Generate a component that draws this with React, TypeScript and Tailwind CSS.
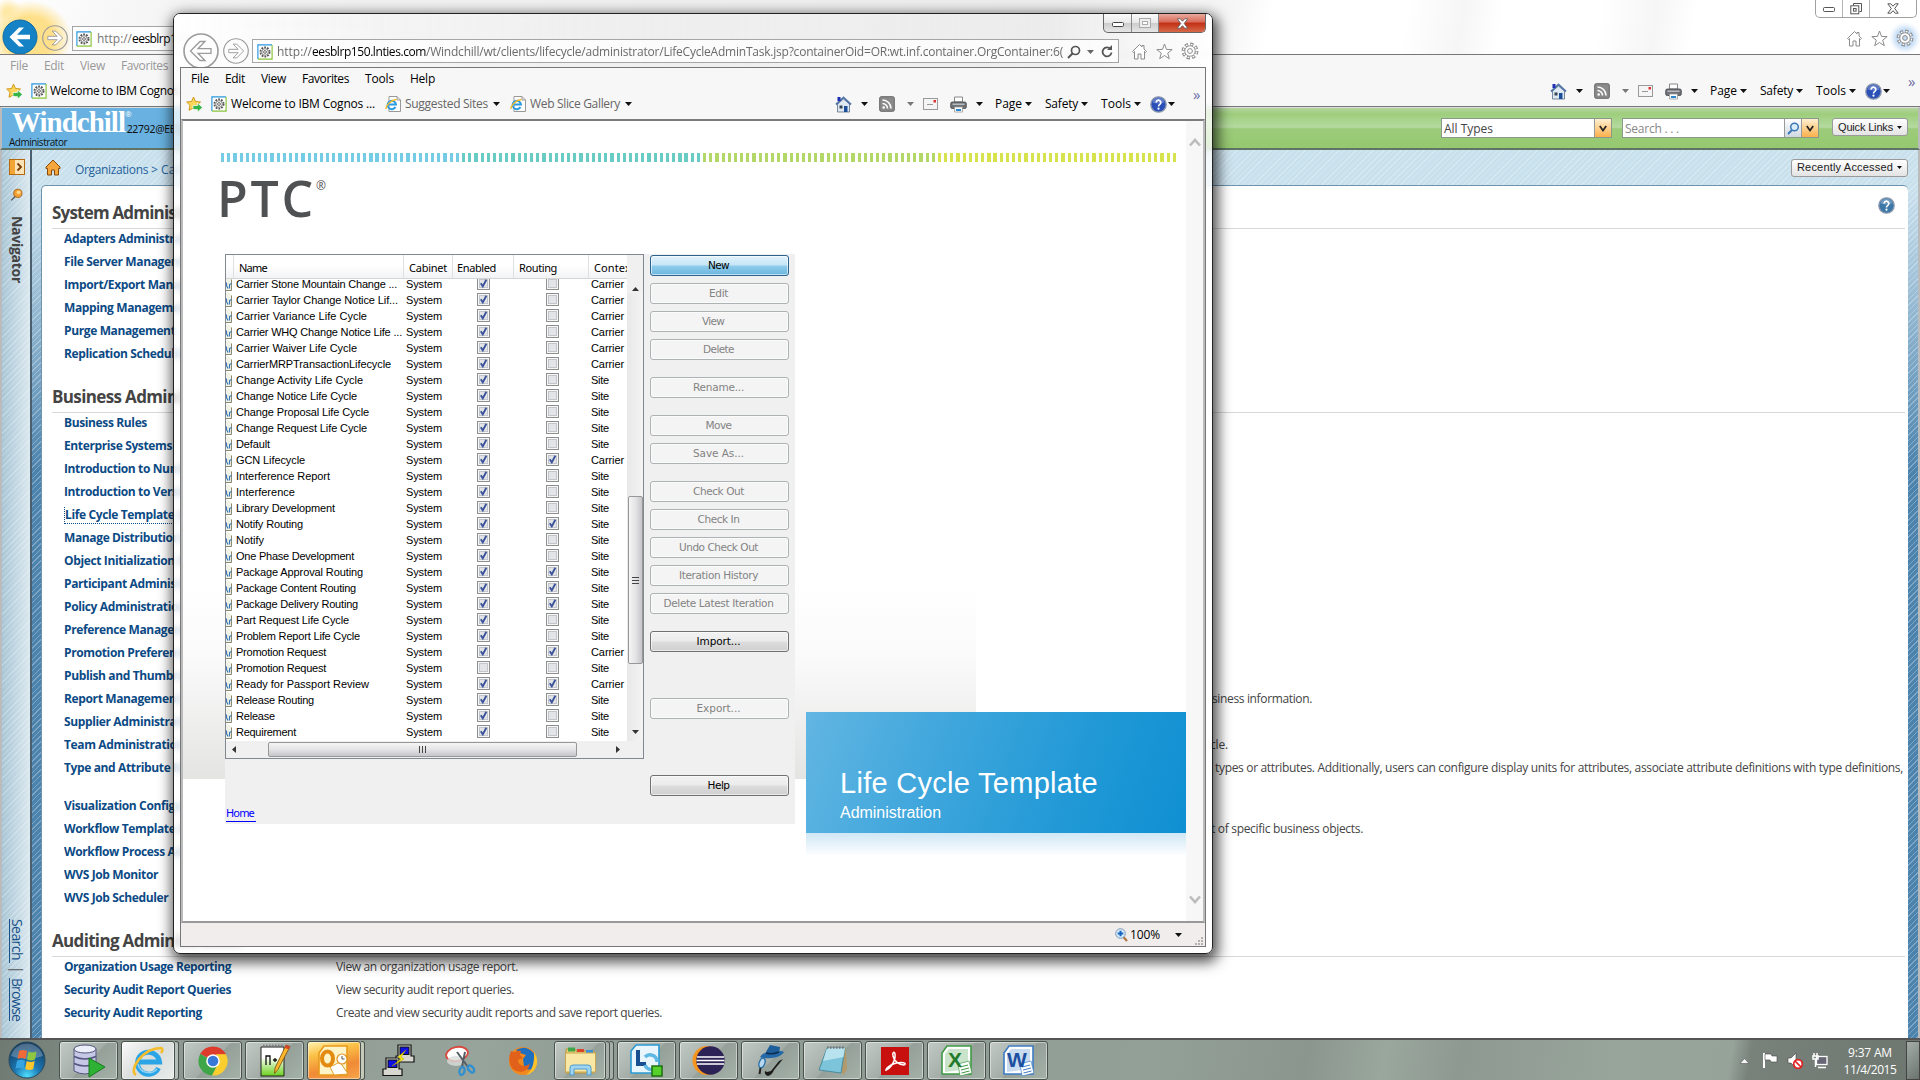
import { useLayoutEffect, useRef, useState, type ReactNode } from "react";

/* Single line of text, tracked so that it fills exactly `w` pixels along its writing direction. */
function T({ w, vertical = false, children, className = "" }: { w?: number; vertical?: boolean; children: string; className?: string }) {
  const ref = useRef<HTMLSpanElement>(null);
  const [ls, setLs] = useState(0);
  useLayoutEffect(() => {
    if (ref.current && w) {
      const box = ref.current.getBoundingClientRect();
      const natural = (vertical ? box.height : box.width) - ls * children.length;
      setLs((w - natural) / children.length);
    }
  }, []);
  return (
    <span ref={ref} className={`inline-block shrink-0 whitespace-pre ${className}`} style={{ letterSpacing: `${ls}px` }}>
      {children}
    </span>
  );
}

const Caret = ({ c = "#111" }: { c?: string }) => (
  <svg width="7" height="4" viewBox="0 0 7 4" className="shrink-0"><path d="M0 0h7L3.5 4z" fill={c} /></svg>
);

const CogPage = () => (
  <svg width="16" height="16" viewBox="0 0 16 16" className="shrink-0">
    <path d="M1 15V1h14" fill="none" stroke="#2e9be0" strokeWidth="1.4" />
    <path d="M15 1v14H1" fill="none" stroke="#8cc63f" strokeWidth="1.4" />
    <rect x="1.7" y="1.7" width="12.6" height="12.6" fill="#fff" />
    <circle cx="8" cy="8" r="4.6" fill="none" stroke="#555" strokeWidth="1.8" strokeDasharray="1.8 1.1" />
    <circle cx="8" cy="8" r="3.3" fill="#fff" stroke="#666" strokeWidth=".8" />
    <circle cx="8" cy="8" r="1.4" fill="none" stroke="#555" strokeWidth=".9" />
  </svg>
);

const FavStar = () => (
  <svg width="17" height="17" viewBox="0 0 17 17" className="shrink-0">
    <path d="M7.5 1l2 4.500 5 .5-3.700 3.300 1 5-4.300-2.500-4.500 2.500 1-5L.7 6l4.900-.5z" fill="#fbd65a" stroke="#d09a1a" />
    <path d="M7 9.500h4.500V7l5 4.500-5 4.500v-2.500H7z" fill="#35b44a" stroke="#fff" strokeWidth=".7" />
  </svg>
);

const IEPage = () => (
  <svg width="16" height="16" viewBox="0 0 16 16" className="shrink-0">
    <path d="M4 .5h8l3.500 3.500v11.500H4z" fill="#fff" stroke="#999" />
    <path d="M12 .5v3.500h3.500" fill="none" stroke="#999" />
    <path d="M10.500 11A4.200 4.200 0 1 1 11 8.500H3" fill="none" stroke="#2b9be0" strokeWidth="2" />
    <path d="M.8 13C1 9 6 4 11.500 3.500" fill="none" stroke="#f4b92b" strokeWidth="1.300" />
  </svg>
);

const House = () => (
  <svg width="17" height="17" viewBox="0 0 17 17" className="shrink-0">
    <path d="M2.500 8v8h12V8l-6-5z" fill="#dfe9f2" stroke="#5b6d86" strokeWidth=".8" />
    <path d="M1 8.500L8.500 1.500 16 8.500" fill="none" stroke="#5578a8" strokeWidth="1.800" />
    <rect x="2.500" y="1" width="3" height="4" fill="#1f2fb5" />
    <rect x="9" y="10" width="3.500" height="6" fill="#1b4f9c" /><rect x="4.500" y="9.500" width="3" height="3" fill="#345" />
  </svg>
);
const Rss = () => (
  <svg width="16" height="16" viewBox="0 0 16 16" className="shrink-0">
    <rect x=".7" y=".7" width="14.600" height="14.600" rx="1.500" fill="#8a8a8a" stroke="#666" />
    <path d="M3.500 4a8.500 8.500 0 0 1 8.500 8.500M3.500 7.500a5 5 0 0 1 5 5" fill="none" stroke="#fff" strokeWidth="1.600" />
    <circle cx="4.700" cy="11.500" r="1.300" fill="#fff" />
  </svg>
);
const Mail = () => (
  <svg width="15" height="12" viewBox="0 0 15 12" className="shrink-0">
    <rect x=".5" y=".5" width="14" height="11" fill="#f5f5f5" stroke="#9a9a9a" />
    <rect x="10.500" y="2" width="2.500" height="2.500" fill="#e03030" /><path d="M4 6.500h6" stroke="#999" />
  </svg>
);
const Printer = () => (
  <svg width="17" height="17" viewBox="0 0 17 17" className="shrink-0">
    <path d="M4.500 1h8v5h-8z" fill="#fff" stroke="#888" />
    <rect x=".7" y="6" width="15.600" height="6.500" rx="1.500" fill="#6d7176" stroke="#44474c" strokeWidth=".8" />
    <rect x="2.500" y="7.500" width="12" height="1.500" fill="#b8bcc0" />
    <path d="M4.500 11h8v5h-8z" fill="#fff" stroke="#999" strokeWidth=".8" /><path d="M6 14h5" stroke="#2a86d0" strokeWidth="2" />
  </svg>
);
const HelpBall = ({ s = 17, c = "#2a50b8" }: { s?: number; c?: string }) => (
  <svg width={s} height={s} viewBox="0 0 17 17" className="shrink-0">
    <circle cx="8.500" cy="8.500" r="7.700" fill={c} stroke="#8b97ad" strokeWidth="1.300" />
    <path d="M2.500 6.500a6.200 6.200 0 0 1 12 0q-6 2-12 0z" fill="#fff" opacity=".25" />
    <path d="M6.200 6.600a2.300 2.300 0 1 1 3.600 1.800q-1.300.8-1.300 2" fill="none" stroke="#fff" strokeWidth="1.700" />
    <circle cx="8.500" cy="12.700" r="1.100" fill="#fff" />
  </svg>
);

const BrowserIcons = ({ blue = false }: { blue?: boolean }) => (
  <div className="flex items-center gap-[8px]">
    <svg width="17" height="17" viewBox="0 0 17 17"><path d="M1.500 8.500L8.500 1.500l2.500 2.500V2.500h2v3.500l2.500 2.500-1 1-1-1V16h-3.500v-5h-3v5H3.500V8.500l-1 1z" fill="#fff" stroke="#8c8c8c" /></svg>
    <svg width="17" height="17" viewBox="0 0 17 17"><path d="M8.500 1l2 5.400 5.700.2-4.500 3.500 1.600 5.600-4.800-3.200-4.800 3.200 1.600-5.600L.8 6.600l5.700-.2z" fill="#fff" stroke="#8c8c8c" /></svg>
    <svg width="18" height="18" viewBox="0 0 18 18" className={blue ? "rounded-full bg-[#c4dcf5] shadow-[0_0_5px_3px_#c4dcf5]" : ""}>
      <circle cx="9" cy="9" r="6.800" fill="none" stroke="#8c8c8c" strokeWidth="3.200" strokeDasharray="3.200 2.140" />
      <circle cx="9" cy="9" r="6.600" fill="none" stroke="#fff" strokeWidth="1.500" strokeDasharray="1.700 3.480" strokeDashoffset="-.7" />
      <circle cx="9" cy="9" r="5.200" fill="#fff" stroke="#8c8c8c" strokeWidth=".8" /><circle cx="9" cy="9" r="2.400" fill={blue ? "#c4dcf5" : "#fff"} stroke="#8c8c8c" />
    </svg>
  </div>
);

/* Command bar: home, feeds, mail, print and the drop-down menus. */
const CommandBar = () => (
  <div className="flex items-center text-[12px] text-black">
    <House /><span className="w-[9px]" /><Caret /><span className="w-[11px]" />
    <Rss /><span className="w-[12px]" /><Caret c="#777" /><span className="w-[9px]" />
    <Mail /><span className="w-[12px]" /><Printer /><span className="w-[9px]" /><Caret /><span className="w-[12px]" />
    <T w={27}>Page</T><span className="w-[3px]" /><Caret /><span className="w-[13px]" />
    <T w={33}>Safety</T><span className="w-[3px]" /><Caret /><span className="w-[13px]" />
    <T w={30}>Tools</T><span className="w-[3px]" /><Caret /><span className="w-[9px]" />
    <HelpBall /><span className="w-[1px]" /><Caret />
  </div>
);

const Arrow = ({ r, flip = false, fill = "none", stroke = "#9b9b9b", inner = "#fff" }: { r: number; flip?: boolean; fill?: string; stroke?: string; inner?: string }) => (
  <svg width={r * 2} height={r * 2} viewBox="0 0 36 36" className={flip ? "shrink-0 -scale-x-100" : "shrink-0"}>
    <circle cx="18" cy="18" r="17" fill={fill} stroke={stroke} strokeWidth={fill === "none" ? 1.6 : 1} />
    <path d="M17 8.500h5l-7 7.200H28v4.600H15l7 7.200h-5L7.500 18z" fill={inner} stroke={fill === "none" ? stroke : "none"} strokeWidth="1.300" />
  </svg>
);

const bizItems = ["Business Rules", "Enterprise Systems", "Introduction to Numbering", "Introduction to Versioning", "Life Cycle Template Administration", "Manage Distribution Targets", "Object Initialization Rules", "Participant Administration", "Policy Administration", "Preference Management", "Promotion Preferences", "Publish and Thumbnail", "Report Management", "Supplier Administration", "Team Administration", "Type and Attribute Management"];
const bizText: Record<number, ReactNode> = {
  12: <span className="ml-[876px]"><T w={100}>siness information.</T></span>,
  14: <span className="ml-[874px]"><T w={18}>cle.</T></span>,
  15: <span className="ml-[879px]"><T w={688}>types or attributes. Additionally, users can configure display units for attributes, associate attribute definitions with type definitions,</T></span>,
};
const wfItems = ["Visualization Configuration", "Workflow Template Admin", "Workflow Process Administration", "WVS Job Monitor", "WVS Job Scheduler"];

function Item({ children, w, right, focus }: { children: string; w?: number; right?: ReactNode; focus?: boolean }) {
  return (
    <div className="flex h-[23px] items-center whitespace-nowrap pl-[12px] text-[12px] text-[#444]">
      <div className="w-[272px] shrink-0 overflow-hidden font-bold tracking-[-0.37px] text-[#0b4a85]">
        {focus ? <span className="border border-dotted border-[#0b4a85] leading-[14px]">{children}</span> : w ? <T w={w}>{children}</T> : children}
      </div>
      {right}
    </div>
  );
}
const Heading = ({ children, w }: { children: string; w: number }) => (
  <div className="mr-[3px] flex h-[31px] items-center border-b border-[#d8d8d8] text-[17px] font-bold text-[#444]"><T w={w}>{children}</T></div>
);

function PillButton({ children, w, tw }: { children: string; w: number; tw: number }) {
  return (
    <div className="flex h-[18px] items-center justify-between rounded-[3px] border border-[#9a9a9a] bg-[linear-gradient(#fff,#e3e3e3)] px-[5px] font-['Liberation_Sans',sans-serif] text-[11px] text-[#222]" style={{ width: w }}>
      <T w={tw}>{children}</T>
      <svg width="5" height="3" viewBox="0 0 5 3"><path d="M0 0h5L2.500 3z" fill="#111" /></svg>
    </div>
  );
}
const OrangeDrop = () => (
  <div className="flex w-[17px] items-center justify-center border-l border-[#999] bg-[linear-gradient(#fff0d0,#fbb04c)]">
    <svg width="8" height="7" viewBox="0 0 8 7"><path d="M.8 1L4 5.500 7.200 1" fill="none" stroke="#222" strokeWidth="1.700" /></svg>
  </div>
);

function BackWindow() {
  return (
    <div className="flex h-[1038px] flex-col">
      {/* title and address */}
      <div className="flex h-[54px] shrink-0 justify-between bg-[linear-gradient(100deg,#fff_0%,#f3f3f3_10%,#ededed_55%,#f6f6f6_64%,#fff_66%,#fff_73%,#f6f6f6_76%,#fff_78%,#fff_83%,#f6f6f6_86%,#fff_88%)]">
        <div className="flex w-[400px] overflow-hidden bg-[radial-gradient(circle_at_8px_12px,#ffe9a8_0_4px,transparent_14px),radial-gradient(ellipse_at_30px_38px,#ffe08a_0_40%,transparent_70%)] bg-[length:72px_54px] bg-no-repeat pl-[2px]">
          <div className="pt-[19px]"><Arrow r={18} fill="#1482c4" stroke="#0d6ca8" /></div>
          <div className="pl-[4px] pt-[25px]"><Arrow r={13} flip /></div>
          <div className="ml-[4px] mt-[26px] flex h-[25px] w-[300px] items-center border border-[#a5a5a5] bg-white/80 pl-[3px] text-[12px] text-[#777]">
            <CogPage /><span className="w-[5px]" /><T w={35}>http://</T><span className="tracking-[-0.55px] text-black">eesblrp150</span>
          </div>
        </div>
        <div className="flex flex-col items-end">
          <div className="mr-[3px] flex h-[18px] w-[102px] rounded-b-[5px] border border-t-0 border-[#a0a0a0] bg-white/60">
            <div className="flex flex-1 items-center justify-center border-r border-[#b5b5b5] pt-[3px]"><svg width="12" height="6"><rect x=".5" y=".5" width="11" height="4" rx="1" fill="#fff" stroke="#555" /></svg></div>
            <div className="flex flex-1 items-center justify-center border-r border-[#b5b5b5]"><svg width="13" height="12"><path d="M3.500 2.500v-2h8v8h-2" fill="none" stroke="#555" /><rect x=".8" y="2.800" width="8" height="8" fill="#fff" stroke="#555" /><rect x="3.500" y="5.500" width="2.600" height="2.600" fill="none" stroke="#555" /></svg></div>
            <div className="flex w-[46px] items-center justify-center"><svg width="12" height="11" viewBox="0 0 12 11"><path d="M.8.8h3L6 3.200 8.200.8h3L7.700 5.500l3.500 4.700h-3L6 7.700 3.800 10.200h-3l3.500-4.700z" fill="#fff" stroke="#555" /></svg></div>
          </div>
          <div className="mr-[6px] mt-[11px]"><BrowserIcons blue /></div>
        </div>
      </div>
      {/* menus and favourites */}
      <div className="flex h-[53px] shrink-0 flex-col border-y border-t-[#777] border-b-[#777] bg-[#f7f7f7] text-[12px]">
        <div className="flex h-[22px] items-center pl-[10px] text-[#999]">
          <T w={18}>File</T><span className="w-[16px]" /><T w={20}>Edit</T><span className="w-[16px]" /><T w={25}>View</T><span className="w-[16px]" /><T w={47}>Favorites</T>
        </div>
        <div className="flex h-[28px] items-center">
          <span className="w-[6px]" /><FavStar /><span className="w-[8px]" /><CogPage /><span className="w-[3px]" /><T w={129}>Welcome to IBM Cognos</T>
          <span className="flex-1" />
          <CommandBar />
          <span className="mb-[20px] w-[30px] pl-[18px] text-[15px] text-[#6d6da5]">»</span>
        </div>
      </div>
      {/* product header */}
      <div className="flex h-[43px] shrink-0 border-x-2 border-b-2 border-t border-x-[#bbb] border-b-[#5f7464] border-t-[#ddd]">
        <div className="w-[200px] bg-[#68b1e0]">
          <div className="flex h-[28px] items-end pl-[10px]">
            <T w={113} className="font-['Liberation_Serif',serif] text-[29px] font-bold leading-[27px] text-white">Windchill</T>
            <span className="self-start text-[8px] leading-[12px] text-white">®</span>
            <span className="mb-[-2px] ml-[-5px] font-['Noto_Sans',sans-serif] text-[10.500px] tracking-[-0.3px] text-[#111]">22792@EESBLRP</span>
          </div>
          <div className="pl-[7px] text-[10px] leading-[12px] text-[#111]"><T w={58}>Administrator</T></div>
        </div>
        <div className="flex flex-1 items-start justify-end bg-[linear-gradient(#b5d5a0,#9dce7c_15%,#b5daa0_48%,#9ccc7a_52%,#95c870)] pr-[10px]">
          <div className="mr-[10px] mt-[10px] flex h-[20px] w-[171px] border border-[#8a9a8a] bg-white text-[12px] text-[#444]">
            <span className="flex-1 pl-[2px] leading-[19px]"><T w={49}>All Types</T></span><OrangeDrop />
          </div>
          <div className="mr-[13px] mt-[10px] flex h-[20px] w-[197px] border border-[#8a9a8a] bg-white text-[12px] text-[#888]">
            <span className="flex-1 pl-[2px] leading-[19px]"><T w={54}>Search . . .</T></span>
            <div className="flex w-[17px] items-center justify-center border-l border-[#999] bg-[linear-gradient(#fff,#cfd8e0)]">
              <svg width="13" height="13" viewBox="0 0 13 13"><circle cx="7.500" cy="5" r="3.800" fill="#d8ecfb" stroke="#3c78b5" strokeWidth="1.500" /><path d="M5 8L1 12" stroke="#3c78b5" strokeWidth="2" /></svg>
            </div>
            <OrangeDrop />
          </div>
          <div className="mt-[10px]"><PillButton w={76} tw={55}>Quick Links</PillButton></div>
        </div>
      </div>
      {/* page body */}
      <div className="flex min-h-0 flex-1 border-x-2 border-x-[#bbb]">
        <div className="flex w-[28px] shrink-0 flex-col items-center bg-[repeating-linear-gradient(135deg,rgba(255,255,255,.25)_0_1px,transparent_1px_4px),linear-gradient(90deg,#a9c6d6,#dbe8ef)] pl-[2px]">
          <svg width="16" height="16" viewBox="0 0 16 16" className="mt-[9px]">
            <rect x=".5" y=".5" width="15" height="15" fill="#fbe3b8" stroke="#b5690f" /><rect x="1" y="1" width="5" height="14" fill="#f2a535" />
            <path d="M8.500 4.500L12 8l-3.500 3.500" fill="none" stroke="#7a3d00" strokeWidth="1.800" />
          </svg>
          <svg width="14" height="14" viewBox="0 0 17 16" className="mt-[13px]">
            <path d="M7 9L1.500 14.500" stroke="#555" strokeWidth="1.600" /><circle cx="9.500" cy="6" r="5" fill="#f2a033" stroke="#a45c10" /><circle cx="10.500" cy="4.800" r="2.300" fill="#ffd68a" />
          </svg>
          <div className="mt-[14px] text-[14px] font-bold leading-[20px] text-[#444] [writing-mode:vertical-rl]"><T w={67} vertical>Navigator</T></div>
          <div className="mb-[17px] mt-auto flex items-center text-[14px] leading-[18px] text-[#17518a] [writing-mode:vertical-rl]"><T w={44} vertical className="underline">Search </T><span className="mt-[3px] text-[#555]">|</span><T w={43} vertical className="mt-[4px] underline">Browse</T></div>
        </div>
        <div className="w-[2px] shrink-0 bg-[#4a6070]" />
        <div className="flex min-w-0 flex-1 flex-col bg-[repeating-linear-gradient(135deg,rgba(255,255,255,.28)_0_1px,transparent_1px_4px),linear-gradient(#c9e0ed,#c9e0ed_40px,#4c83ad_320px)] pl-[9px] pr-[10px]">
          <div className="flex h-[35px] shrink-0 items-center">
            <svg width="16" height="17" viewBox="0 0 16 17" className="ml-[4px]"><path d="M1 8L8 1l7 7v1.500h-1.500V16h-4v-5h-3v5h-4V9.500H1z" fill="#f5a63c" stroke="#8a4a0a" /></svg>
            <span className="w-[14px]" />
            <span className="mt-[4px] text-[12px] text-[#24629b]"><T w={73}>Organizations</T> &gt; Carrier</span>
            <span className="flex-1" />
            <PillButton w={117} tw={96}>Recently Accessed</PillButton>
          </div>
          <div className="relative flex-1 rounded-t-[5px] border-l border-t border-[#6d93ad] bg-white pl-[10px] pt-[12px]">
            <div className="absolute right-[13px] top-[11px]"><HelpBall c="#3b78a8" /></div>
            <Heading w={178}>System Administration</Heading>
            <div className="-mt-[2px]">
              {["Adapters Administration", "File Server Management", "Import/Export Management", "Mapping Management", "Purge Management", "Replication Scheduling"].map((t) => <Item key={t}>{t}</Item>)}
            </div>
            <div className="h-[17px]" />
            <Heading w={193}>Business Administration</Heading>
            <div className="-mt-[2px]">
              {bizItems.map((t, i) => <Item key={t} focus={i === 4} right={bizText[i]}>{t}</Item>)}
            </div>
            <div className="h-[15px]" />
            {wfItems.map((t, i) => <Item key={t} right={i === 1 ? <span className="ml-[875px]"><T w={152}>t of specific business objects.</T></span> : undefined}>{t}</Item>)}
            <div className="h-[17px]" />
            <Heading w={190}>Auditing Administration</Heading>
            <div className="-mt-[2px]">
              <Item w={167} right={<T w={182}>View an organization usage report.</T>}>Organization Usage Reporting</Item>
              <Item w={167} right={<T w={178}>View security audit report queries.</T>}>Security Audit Report Queries</Item>
              <Item w={138} right={<T w={326}>Create and view security audit reports and save report queries.</T>}>Security Audit Reporting</Item>
            </div>
          </div>
        </div>
      </div>
    </div>
  );
}

/* name, name width, enabled, routing, context */
const rows: [string, number, number, number, string][] = [
  ["Carrier Stone Mountain Change ...", 161, 1, 0, "Carrier"],
  ["Carrier Taylor Change Notice Lif...", 162, 1, 0, "Carrier"],
  ["Carrier Variance Life Cycle", 131, 1, 0, "Carrier"],
  ["Carrier WHQ Change Notice Life ...", 166, 1, 0, "Carrier"],
  ["Carrier Waiver Life Cycle", 121, 1, 0, "Carrier"],
  ["CarrierMRPTransactionLifecycle", 155, 1, 0, "Carrier"],
  ["Change Activity Life Cycle", 127, 1, 0, "Site"],
  ["Change Notice Life Cycle", 121, 1, 0, "Site"],
  ["Change Proposal Life Cycle", 133, 1, 0, "Site"],
  ["Change Request Life Cycle", 131, 1, 0, "Site"],
  ["Default", 34, 1, 0, "Site"],
  ["GCN Lifecycle", 69, 1, 1, "Carrier"],
  ["Interference Report", 94, 1, 0, "Site"],
  ["Interference", 59, 1, 0, "Site"],
  ["Library Development", 99, 1, 0, "Site"],
  ["Notify Routing", 67, 1, 1, "Site"],
  ["Notify", 28, 1, 0, "Site"],
  ["One Phase Development", 118, 1, 0, "Site"],
  ["Package Approval Routing", 127, 1, 1, "Site"],
  ["Package Content Routing", 120, 1, 1, "Site"],
  ["Package Delivery Routing", 122, 1, 1, "Site"],
  ["Part Request Life Cycle", 113, 1, 0, "Site"],
  ["Problem Report Life Cycle", 124, 1, 0, "Site"],
  ["Promotion Request", 90, 1, 1, "Carrier"],
  ["Promotion Request", 90, 0, 0, "Site"],
  ["Ready for Passport Review", 133, 1, 1, "Carrier"],
  ["Release Routing", 78, 1, 1, "Site"],
  ["Release", 39, 1, 0, "Site"],
  ["Requirement", 60, 1, 0, "Site"],
];

const Check = ({ on }: { on: boolean }) => (
  <svg width="13" height="13" viewBox="0 0 13 13" className="mb-px shrink-0">
    <rect x=".5" y=".5" width="12" height="12" fill="#f6f6f6" stroke="#8e8f8f" />
    <rect x="2.500" y="2.500" width="8" height="8" fill="#e2e4e8" stroke="#c2c5cc" />
    {on && <path d="M3.800 6.200l2 3.200L9.300 2.800" fill="none" stroke="#3d5499" strokeWidth="1.900" />}
  </svg>
);

const HeadCell = ({ children, className, w }: { children?: string; className: string; w?: number }) => (
  <div className={`flex h-full shrink-0 items-center overflow-hidden border-r border-[#dfe0e2] pt-[4px] ${className}`}>{children && <T w={w}>{children}</T>}</div>
);

function LifeCycleTable() {
  return (
    <div className="flex h-[505px] w-[419px] flex-col border border-[#828790] bg-[#f0f0f0] font-['Liberation_Sans',sans-serif] text-[11px] text-black">
      <div className="flex min-h-0 flex-1">
        <div className="flex w-[401px] flex-col overflow-hidden bg-white">
          <div className="flex h-[24px] shrink-0 border-b border-[#d5d5d5] bg-[linear-gradient(#fff_45%,#f2f3f5)] font-['Noto_Sans',sans-serif]">
            <HeadCell className="w-[8px]" />
            <HeadCell className="w-[170px] pl-[5px]" w={28}>Name</HeadCell>
            <HeadCell className="w-[49px] pl-[5px]" w={38}>Cabinet</HeadCell>
            <HeadCell className="w-[61px] pl-[4px]" w={39}>Enabled</HeadCell>
            <HeadCell className="w-[75px] pl-[5px]" w={38}>Routing</HeadCell>
            <HeadCell className="w-[60px] pl-[5px]" w={41}>Context</HeadCell>
          </div>
          <div className="flex flex-1 flex-col overflow-hidden">
            {rows.map(([name, w, en, ro, ctx], i) => (
              <div key={i} className={`flex shrink-0 items-center ${i === 0 ? "-mt-[3px] h-[16px]" : "h-[16px]"}`}>
                <svg width="7" height="16" viewBox="0 0 7 16" className="shrink-0"><path d="M0 .5h2.500l3 2.500v11.500H0" fill="#f1f3e6" stroke="none" /><path d="M5.500 3.500v11H0" fill="none" stroke="#8a8a72" /><path d="M.5 6.500v3l1.500 3M3.500 12.500V8.500l2-1" fill="none" stroke="#3a74b8" strokeWidth="1.200" /></svg>
                <div className="w-[173px] shrink-0 pl-[3px]"><T w={w}>{name}</T></div>
                <div className="w-[71px] shrink-0"><T w={36}>System</T></div>
                <Check on={!!en} /><span className="w-[56px] shrink-0" /><Check on={!!ro} /><span className="w-[32px] shrink-0" />
                <T w={ctx === "Site" ? 18 : 33}>{ctx}</T>
              </div>
            ))}
          </div>
        </div>
        <div className="flex w-[16px] flex-col items-center bg-[linear-gradient(90deg,#e8e8e8,#f4f4f4)]">
          <div className="w-full bg-[#f0f0f0] pb-[2px] pt-[32px]"><svg width="7" height="4" className="mx-auto"><path d="M0 4h7L3.500 0z" fill="#333" /></svg></div>
          <div className="mt-[203px] flex h-[168px] w-[15px] flex-col items-center justify-center gap-[2px] rounded-[2px] border border-[#979797] bg-[linear-gradient(90deg,#f5f5f5,#e4e4e6_50%,#c6c6ca)]">
            <i className="h-px w-[7px] bg-[#444]" /><i className="h-px w-[7px] bg-[#444]" /><i className="h-px w-[7px] bg-[#444]" />
          </div>
          <svg width="7" height="4" className="mb-[7px] mt-auto"><path d="M0 0h7L3.500 4z" fill="#333" /></svg>
        </div>
      </div>
      <div className="flex h-[17px] shrink-0 items-start pl-[6px] pr-[23px] pt-px">
        <svg width="4" height="7" className="mt-[4px]"><path d="M4 0v7L0 3.500z" fill="#333" /></svg>
        <div className="ml-[32px] flex h-[15px] w-[309px] items-center justify-center gap-[2px] rounded-[2px] border border-[#979797] bg-[linear-gradient(#f5f5f5,#e4e4e6_50%,#c6c6ca)]">
          <i className="h-[7px] w-px bg-[#444]" /><i className="h-[7px] w-px bg-[#444]" /><i className="h-[7px] w-px bg-[#444]" />
        </div>
        <svg width="4" height="7" className="ml-auto mt-[4px]"><path d="M0 0v7l4-3.500z" fill="#333" /></svg>
      </div>
    </div>
  );
}

/* label, gap above, text width, kind */
const actions: [string, number, number, string][] = [
  ["New", 0, 21, "primary"], ["Edit", 7, 19, ""], ["View", 7, 22, "left"], ["Delete", 7, 31, ""], ["Rename...", 17, 51, ""], ["Move", 17, 26, ""], ["Save As...", 7, 51, ""],
  ["Check Out", 17, 51, ""], ["Check In", 7, 42, ""], ["Undo Check Out", 7, 79, ""], ["Iteration History", 7, 79, ""], ["Delete Latest Iteration", 7, 110, ""], ["Import...", 17, 44, "on"], ["Export...", 46, 44, ""], ["Help", 56, 22, "on"],
];

function ActionButton({ label, gap, w, kind }: { label: string; gap: number; w: number; kind: string }) {
  const look =
    kind === "primary"
      ? "border-[#2c628b] bg-[linear-gradient(#e3f3fb,#c4e5f6_48%,#90cdec_52%,#69b5de)] text-black"
      : kind === "on"
        ? "border-[#707070] bg-[linear-gradient(#f2f2f2,#ebebeb_48%,#dddddd_52%,#cfcfcf)] text-black"
        : "border-[#adb2b5] bg-[#f4f4f4] text-[#838383]";
  return (
    <div className={`flex h-[21px] w-[139px] shrink-0 items-center justify-center rounded-[3px] border shadow-[inset_0_0_0_1px_rgba(255,255,255,.6)] ${kind === "left" ? "pr-[13px]" : "pr-[2px]"} ${look}`} style={{ marginTop: gap }}>
      <T w={w}>{label}</T>
    </div>
  );
}

function FrontWindow() {
  return (
    <div className="absolute left-[173px] top-[13px] flex h-[941px] w-[1040px] flex-col rounded-[7px] border border-[#222] bg-white/75 px-[6px] pb-[6px] shadow-[2px_5px_14px_3px_rgba(0,0,0,.7)] backdrop-blur-[3px]">
      {/* caption and address */}
      <div className="-mx-[6px] flex h-[53px] shrink-0 rounded-t-[6px] bg-[linear-gradient(90deg,#ffffffdd,#f0f0f0aa_20%,#d4d4d455_45%,#e8e8e8aa_60%,#cfcfcf55_85%,#ffffffaa)] pl-[9px]">
        <div className="flex w-[69px] shrink-0 overflow-hidden"><div className="pt-[19px]"><Arrow r={18} /></div><div className="pl-[4px] pt-[24px]"><Arrow r={13} flip /></div></div>
        <div className="mt-[25px] flex h-[24px] w-[867px] shrink-0 items-center border border-[#a5a5a5] bg-white/75 pl-[4px] pt-px text-[12px] text-[#6b6b6b]">
          <CogPage /><span className="w-[4px]" /><T w={35}>http://</T><T w={114} className="text-black">eesblrp150.lnties.com</T>
          <T w={637}>/Windchill/wt/clients/lifecycle/administrator/LifeCycleAdminTask.jsp?containerOid=OR:wt.inf.container.OrgContainer:6(</T>
          <svg width="14" height="14" viewBox="0 0 14 14" className="ml-[4px] shrink-0"><circle cx="8.500" cy="5.500" r="4" fill="none" stroke="#555" strokeWidth="1.700" /><path d="M5.500 8.500L1 13" stroke="#555" strokeWidth="2" /></svg>
          <span className="w-[6px]" /><Caret c="#666" /><span className="w-[7px]" />
          <svg width="12" height="13" viewBox="0 0 12 13" className="shrink-0"><path d="M9.500 4A4.500 4.500 0 1 0 10.500 7.500" fill="none" stroke="#555" strokeWidth="1.800" /><path d="M11 0v5H6z" fill="#555" /></svg>
        </div>
        <div className="flex w-[87px] shrink-0 flex-col items-end">
          <div className="flex h-[19px] w-[103px] shrink-0 overflow-hidden rounded-b-[5px] border border-t-0 border-[#666] bg-[linear-gradient(#fafafa,#e9e9e9_48%,#cdcdcd_52%,#e6e6e6)]">
            <div className="flex w-[28px] items-center justify-center border-r border-[#888] pt-[4px]"><svg width="12" height="6"><rect x=".5" y=".5" width="11" height="4" rx="1" fill="#fff" stroke="#444" /></svg></div>
            <div className="flex w-[27px] items-center justify-center border-r border-[#888]"><svg width="12" height="10"><rect x=".5" y=".5" width="11" height="9" fill="#eee" stroke="#aaa" /><rect x="3.500" y="3.500" width="5" height="3" fill="#fff" stroke="#aaa" /></svg></div>
            <div className="flex flex-1 items-center justify-center bg-[linear-gradient(#e8aa9c,#d8695a_45%,#c02f14_50%,#d8694a)]"><svg width="13" height="11" viewBox="0 0 12 11"><path d="M.8.8h3L6 3.200 8.200.8h3L7.700 5.500l3.500 4.700h-3L6 7.700 3.800 10.200h-3l3.500-4.700z" fill="#fff" stroke="#555" strokeWidth=".8" /></svg></div>
          </div>
          <div className="ml-[12px] mt-[9px] self-start"><BrowserIcons /></div>
        </div>
      </div>
      {/* client area */}
      <div className="flex min-h-0 flex-1 flex-col border border-[#777]">
        <div className="flex h-[51px] shrink-0 flex-col bg-[#f7f7f7] text-[12px]">
          <div className="flex h-[22px] items-center pl-[10px] text-black">
            <T w={18}>File</T><span className="w-[16px]" /><T w={20}>Edit</T><span className="w-[16px]" /><T w={25}>View</T><span className="w-[16px]" /><T w={47}>Favorites</T><span className="w-[16px]" /><T w={29}>Tools</T><span className="w-[16px]" /><T w={25}>Help</T>
          </div>
          <div className="flex h-[28px] items-center">
            <span className="w-[5px]" /><FavStar /><span className="w-[8px]" /><CogPage /><span className="w-[4px]" /><T w={144}>Welcome to IBM Cognos ...</T>
            <span className="w-[10px]" /><IEPage /><span className="w-[4px]" /><T w={83} className="text-[#666]">Suggested Sites</T><span className="w-[5px]" /><Caret />
            <span className="w-[10px]" /><IEPage /><span className="w-[4px]" /><T w={90} className="text-[#666]">Web Slice Gallery</T><span className="w-[5px]" /><Caret />
            <span className="flex-1" />
            <CommandBar />
            <span className="mb-[20px] w-[30px] pl-[18px] text-[15px] text-[#6d6da5]">»</span>
          </div>
        </div>
        <div className="flex min-h-0 flex-1 border-2 border-t-[#7b7b7b] border-l-[#bbb] border-r-[#bbb] border-b-[#999] bg-white">
          <div className="relative flex flex-1 flex-col">
            <div className="absolute left-0 top-[460px] h-[198px] w-[793px] bg-[linear-gradient(#fff,#fafafa_40%,#e4e4e3)]" />
            <div className="ml-[38px] mt-[32px] h-[9px] w-[956px] bg-[repeating-linear-gradient(90deg,transparent_0_3.200px,#fff_3.200px_6.180px),linear-gradient(90deg,#74cde4_0_240px,#68cbc4_240px_482px,#b4d868_482px_716px,#d6e34c_716px)]" />
            <div className="ml-[34px] mt-[11px] flex h-[51px] items-center text-[#505153]">
              <T w={99} className="font-['Open_Sans',sans-serif] text-[50px] font-semibold leading-[51px]">PTC</T><span className="mb-[25px] text-[12px]">®</span>
            </div>
            <div className="relative ml-[42px] mt-[30px] flex h-[570px] w-[570px] shrink-0 flex-col bg-[#f0f0f0]">
              <div className="flex justify-between pr-[6px]">
                <LifeCycleTable />
                <div className="mt-px flex h-[541px] flex-col font-['DejaVu_Sans',sans-serif] text-[10.500px]">
                  {actions.map(([label, gap, w, kind]) => <ActionButton key={label} label={label} gap={gap} w={w} kind={kind} />)}
                </div>
              </div>
              <div className="mt-[8px] pl-px font-['Noto_Sans',sans-serif] text-[11px] leading-[17px]"><T w={30} className="border-b border-[#00f] text-[#00f]">Home </T></div>
            </div>
            {/* title banner lies over the page gradient */}
            <div className="absolute right-0 top-[591px] flex h-[121px] w-[380px] flex-col bg-[linear-gradient(110deg,#62b6e2,#3fa6dc_35%,#2199d6_70%,#0f8fd2)] pl-[34px] font-['Liberation_Sans',sans-serif] text-white">
              <T w={258} className="mt-[54px] self-start text-[29px] leading-[35px]">Life Cycle Template</T>
              <T w={101} className="mt-[2px] self-start text-[16px] leading-[20px]">Administration</T>
            </div>
            <div className="absolute right-0 top-[712px] h-[23px] w-[380px] bg-[linear-gradient(#cfe7f5,#fff)]" />
          </div>
          <div className="flex w-[17px] flex-col items-center justify-between bg-[#f7f7f7] pb-[17px] pt-[17px]">
            <svg width="12" height="9"><path d="M1 7.500l5-5.500 5 5.500" fill="none" stroke="#bcbcbc" strokeWidth="2.600" /></svg>
            <svg width="12" height="9"><path d="M1 1.500L6 7l5-5.500" fill="none" stroke="#bcbcbc" strokeWidth="2.600" /></svg>
          </div>
        </div>
        <div className="flex h-[23px] shrink-0 items-center justify-end bg-[#f0edec] text-[12px] text-black">
          <svg width="13" height="14" viewBox="0 0 13 14"><path d="M8 8.500L12 13" stroke="#b07a40" strokeWidth="2.300" /><circle cx="5.500" cy="5.500" r="4.800" fill="#d8ebfa" stroke="#7f9ab5" /><path d="M5.500 2.700v5.600M2.700 5.500h5.600" stroke="#1565c0" strokeWidth="2" /></svg>
          <span className="w-[2px]" /><T w={30}>100%</T><span className="w-[15px]" /><Caret /><span className="w-[13px]" />
          <svg width="9" height="9" className="mr-px self-end"><path d="M6 0h2v2H6zM3 3h2v2H3zM6 3h2v2H6zM0 6h2v2H0zM3 6h2v2H3zM6 6h2v2H6z" fill="#b5b0b0" /></svg>
        </div>
      </div>
    </div>
  );
}

const Task = ({ children, className = "" }: { children: ReactNode; className?: string }) => (
  <div className={`flex h-[39px] shrink-0 items-center justify-center rounded-[3px] border border-[#4a524d] shadow-[inset_0_0_0_1px_rgba(255,255,255,.45)] ${className}`}>{children}</div>
);
const glass = "bg-[linear-gradient(135deg,#c3cac6,#a3ada6_50%,#94a098_52%,#a5b2a8)]";

const OfficeTile = ({ letter, c, dark }: { letter: string; c: string; dark: string }) => (
  <svg width="32" height="32" viewBox="0 0 32 32">
    <path d="M6 1h24v28H1V8z" fill="#fff" stroke={c} strokeWidth="1.600" />
    <path d="M4 9l4-5h19v20L4 27z" fill={c} opacity=".28" />
    <path d="M17 19l11-3 3 12-12 3z" fill="#fff" stroke={c} strokeWidth=".7" /><path d="M19 22l8-2M20 25l8-2M20.500 28l8-2" stroke={c} />
    <text x="14" y="22" textAnchor="middle" fontSize="21" fontWeight="bold" fontFamily="Liberation Sans, sans-serif" fill={dark}>{letter}</text>
  </svg>
);

function Taskbar() {
  return (
    <div className="relative flex h-[42px] items-end border-t-2 border-[#555] bg-[linear-gradient(100deg,#6f7a73,#8c978f_8%,#97a49b_25%,#8d9990_35%,#93a097_60%,#8b978e_68%,#9aa79d_72%,#8e9a91_76%,#98a59b_84%,#96a399_90%,#78827b_91%,#6d766f)]">
      <div className="flex w-[59px] shrink-0 justify-center self-center pr-[5px]">
        <svg width="38" height="38" viewBox="0 0 38 38">
          <defs><radialGradient id="orb" cx=".5" cy=".95" r=".9"><stop offset="0" stopColor="#4fe0ff" /><stop offset=".4" stopColor="#1c78b4" /><stop offset="1" stopColor="#123a60" /></radialGradient></defs>
          <circle cx="19" cy="19" r="18" fill="url(#orb)" stroke="#2b4a5c" />
          <path d="M3 15a16.500 16.500 0 0 1 32 0q-16 6-32 0z" fill="#fff" opacity=".25" />
          <path d="M11 10q4-2 8 0l-1.500 8q-4-2-8 0z" fill="#ef6a37" /><path d="M20.500 10.500q4 2 8 0l-1.500 8q-4 2-8 0z" fill="#8fc73e" />
          <path d="M9 19.700q4-2 8 0l-1.500 8q-4-2-8 0z" fill="#35a4e0" /><path d="M18.700 20q4 2 8 0l-1.500 8q-4 2-8 0z" fill="#fbc62c" />
        </svg>
      </div>
      <Task className={`w-[59px] ${glass}`}>
        <svg width="34" height="34" viewBox="0 0 34 34">
          <path d="M2 5v22q11 6 22 0V5z" fill="#c6c8e6" stroke="#54567f" /><ellipse cx="13" cy="5" rx="11" ry="4" fill="#eceef9" stroke="#54567f" />
          <path d="M2 12.500q11 5 22 0M2 19.500q11 5 22 0" fill="none" stroke="#54567f" strokeWidth="1.500" /><path d="M17 14l16 9-16 10z" fill="#2eb135" stroke="#157a1c" />
        </svg>
      </Task>
      <Task className="ml-[3px] w-[54px] bg-[linear-gradient(135deg,#fafafa,#d8dcda_50%,#e8ecea)]">
        <svg width="34" height="34" viewBox="0 0 34 34">
          <path d="M27.500 24A11 11 0 1 1 28.500 18H9" fill="none" stroke="#2ba5e6" strokeWidth="5" /><path d="M26 25A11 11 0 0 1 7 20" fill="none" stroke="#8fd4f5" strokeWidth="1.500" />
          <path d="M5 31C-3 26 12 4 30 4q3 1 0 5" fill="none" stroke="#f5bd2c" strokeWidth="2.600" />
        </svg>
      </Task>
      <div className="h-[39px] w-[4px] rounded-r-[3px] border border-l-0 border-[#4a524d] bg-[#b5beb8]" />
      <Task className={`ml-[4px] w-[59px] ${glass}`}>
        <svg width="30" height="30" viewBox="0 0 30 30">
          <path d="M15 15L2.400 7.700A14.500 14.500 0 0 1 27.600 7.700z" fill="#dd3b2c" /><path d="M2.400 7.700A14.500 14.500 0 0 0 14 29.500L20 19z" fill="#3fa648" /><path d="M27.600 7.700A14.500 14.500 0 0 1 14 29.500L21 16l-3-8z" fill="#fbce30" />
          <path d="M2.400 7.700h25.200" stroke="#dd3b2c" strokeWidth="1" /><circle cx="15" cy="15" r="6.800" fill="#fff" /><circle cx="15" cy="15" r="5.300" fill="#3a78d8" />
        </svg>
      </Task>
      <Task className={`ml-[3px] w-[59px] ${glass}`}>
        <svg width="32" height="34" viewBox="0 0 32 34">
          <defs><linearGradient id="npp" x1="0" y1="0" x2="0" y2="1"><stop offset=".35" stopColor="#fff" /><stop offset="1" stopColor="#6bd01b" /></linearGradient></defs>
          <path d="M2 3h23v29H2z" fill="url(#npp)" stroke="#222" /><path d="M4 2h20" stroke="#777" strokeWidth="2.500" strokeDasharray="1.500 1.500" />
          <path d="M7 21V12h4v9M14 16h4M16 14v4M20 16h4M22 14v4" fill="none" stroke="#111" strokeWidth="1.300" />
          <path d="M27 1l4 1.500-12 23-3.500 4 .5-5.500z" fill="#fbb62c" stroke="#7a4c10" strokeWidth=".8" /><path d="M27 1l4 1.500-1.500 3-4-1.800z" fill="#d8462c" />
        </svg>
      </Task>
      <Task className="ml-[3px] w-[54px] bg-[linear-gradient(165deg,#fff3b0,#fbc146_30%,#f08a35_65%,#f6a54c)]">
        <svg width="32" height="32" viewBox="0 0 32 32">
          <path d="M6 1h23v29H1V8z" fill="#fff3c8" stroke="#e89a18" strokeWidth="1.600" /><path d="M12 22l10-5 8 12-14 1z" fill="#fff" stroke="#dfa028" />
          <ellipse cx="9.500" cy="13.500" rx="5.500" ry="7" fill="none" stroke="#e38b10" strokeWidth="4" /><circle cx="24" cy="14" r="5" fill="#fff" stroke="#e09320" strokeWidth="1.200" /><path d="M24 11v3h2.500" fill="none" stroke="#555" />
        </svg>
      </Task>
      <div className="h-[39px] w-[4px] rounded-r-[3px] border border-l-0 border-[#4a524d] bg-[#c5cbb8]" />
      <div className="flex h-[39px] w-[189px] items-center pl-[17px]">
        <svg width="33" height="33" viewBox="0 0 33 33">
          <path d="M16 1h13v11h3v6H14v-6h2z" fill="#d8d8d0" stroke="#111" strokeWidth="1.200" /><rect x="18" y="3" width="9" height="7.500" fill="#1010e0" stroke="#111" />
          <path d="M4 14h13v11h3v6.500H1V25h3z" fill="#d8d8d0" stroke="#111" strokeWidth="1.200" /><rect x="6" y="16" width="9" height="7.500" fill="#1010e0" stroke="#111" /><path d="M24 6l-8 7 3 2-9 7 12-7-3-2z" fill="#fff200" stroke="#aa9a00" strokeWidth=".5" />
        </svg>
        <svg width="32" height="33" viewBox="0 0 32 33" className="ml-[30px]">
          <ellipse cx="12" cy="10" rx="11" ry="7" fill="#fff" stroke="#d9483c" strokeWidth="1.800" transform="rotate(-12 12 10)" /><ellipse cx="11" cy="17" rx="9" ry="5" fill="#d8dcda" opacity=".8" />
          <path d="M12 8l11 15M20 8l-3 15" stroke="#555e66" strokeWidth="2" /><ellipse cx="17" cy="27" rx="2.500" ry="4" fill="none" stroke="#2f8fd0" strokeWidth="2.300" transform="rotate(15 17 27)" /><ellipse cx="26" cy="25" rx="2.500" ry="4" fill="none" stroke="#2f8fd0" strokeWidth="2.300" transform="rotate(-40 26 25)" />
        </svg>
        <svg width="30" height="32" viewBox="0 0 30 32" className="ml-[31px]">
          <circle cx="15" cy="16" r="14" fill="#f08a1e" /><path d="M8 5a13 13 0 0 1 20 9q1 6-4 10-6 2-8-3l-1-7 3-4-6-2z" fill="#1e6fc0" />
          <path d="M3 6q2 1 4 1 3-2 6-1l-1 4 3 3-5 2q0 5 6 6 4 0 6-3-1 8-9 9Q2 26 1.500 16 1 10 3 6z" fill="#e2611a" /><path d="M26 7q4 6 3 12-2 9-11 11 9-6 8-23z" fill="#fbc22a" />
        </svg>
      </div>
      <Task className={`w-[52px] ${glass}`}>
        <svg width="33" height="33" viewBox="0 0 33 33">
          <path d="M2 5h9l1 2h18v22H2z" fill="#e9cd74" stroke="#b8963a" /><path d="M4 3.500h7v4H4z" fill="#3fa648" /><path d="M13 5h7v3h-7z" fill="#d8462c" /><path d="M22 6h7v3h-7z" fill="#3a8fd8" />
          <path d="M1.500 9h30v19h-30z" fill="#f9e7a5" stroke="#c8a750" /><path d="M6 31v-7q0-3 3-3h15q3 0 3 3v7h-4v-6H10v6z" fill="#9fd4f2" stroke="#4d9dcc" />
        </svg>
      </Task>
      <div className="h-[39px] w-[4px] rounded-r-[3px] border border-l-0 border-[#4a524d] bg-[#a5afa8]" />
      <div className="h-[39px] w-[4px] rounded-r-[3px] border border-l-0 border-[#4a524d] bg-[#a5afa8]" />
      <Task className={`ml-[3px] w-[59px] ${glass}`}>
        <svg width="33" height="33" viewBox="0 0 33 33">
          <path d="M6 1h23v28H1V7z" fill="#e8f5fc" stroke="#2a9ad2" strokeWidth="1.600" /><path d="M8 6v14h8" fill="none" stroke="#184f90" strokeWidth="4" />
          <path d="M15 13a7 7 0 0 1 12 5M27 23a7 7 0 0 1-12-2" fill="none" stroke="#5fb9e4" strokeWidth="3.500" /><rect x="22" y="22" width="10" height="10" fill="#56d02a" stroke="#1e6f10" strokeWidth="1.500" />
        </svg>
      </Task>
      <Task className={`ml-[3px] w-[59px] ${glass}`}>
        <svg width="33" height="31" viewBox="0 0 33 31"><circle cx="15" cy="15.500" r="14.500" fill="#f7941e" /><circle cx="18.500" cy="15.500" r="14.200" fill="#2c2255" /><path d="M5 12h27M4.500 15.500h28M5 19h27" stroke="#fff" strokeWidth="1.700" /></svg>
      </Task>
      <Task className={`ml-[3px] w-[59px] ${glass}`}>
        <svg width="28" height="33" viewBox="0 0 28 33">
          <path d="M9 8l4-7 5 1 5 1-1 8q-8 2-14-1z" fill="#1f5f9c" /><path d="M3 13q3-5 8-4 6 1 12-2 3 0 4 1-3 5-12 6-8 1-12-1z" fill="#2468a8" /><path d="M9 9q6 2 13-1" fill="none" stroke="#0e2f50" strokeWidth="1.500" />
          <path d="M22 17l4-2-9 11q-2 5-6 6-4-1-3-5l2 1 4-1z" fill="#1c1c1c" /><ellipse cx="5" cy="19" rx="2.800" ry="5" fill="#b8d8ee" stroke="#2a6fa8" strokeWidth="1.300" transform="rotate(20 5 19)" /><path d="M3.500 24l-1 6" stroke="#222" strokeWidth="2" />
        </svg>
      </Task>
      <Task className={`ml-[3px] w-[59px] ${glass}`}>
        <svg width="32" height="32" viewBox="0 0 32 32">
          <path d="M11 3h18l1 22-4 5z" fill="#b39a6a" /><path d="M10 3h18l-4 25L2 25z" fill="#7cc4da" stroke="#4a8ca0" /><path d="M10 3h18l-1.500 9L6 16z" fill="#b8e2ee" /><path d="M10 2.500h18" stroke="#777" strokeWidth="2.500" strokeDasharray="1.500 1.500" />
        </svg>
      </Task>
      <Task className={`ml-[3px] w-[59px] ${glass}`}>
        <svg width="28" height="28" viewBox="0 0 28 28"><rect width="28" height="28" fill="#c8100e" /><path d="M5 23c5-2 10-10 9-16-.5-3-3-2-2 2 1 5 6 9 11 9 3-1 0-3-4-2.500-5 .5-9 2-12 4.500-3 3-2 4-2 3z" fill="none" stroke="#fff" strokeWidth="1.500" /></svg>
      </Task>
      <Task className={`ml-[3px] w-[59px] ${glass}`}><OfficeTile letter="X" c="#3f9a45" dark="#1f7a2a" /></Task>
      <Task className={`ml-[3px] w-[59px] ${glass}`}><OfficeTile letter="W" c="#3d7cc4" dark="#1b4fa0" /></Task>
      <div className="flex h-[39px] flex-1 items-center justify-end text-[12px] leading-[17px] text-white">
        <svg width="9" height="6" className="mr-[13px]"><path d="M0 5.500h9L4.500 .5z" fill="#f5f5f5" stroke="#444" strokeWidth=".5" /></svg>
        <svg width="16" height="17" viewBox="0 0 16 17" className="mr-[9px]"><path d="M2 1v15" stroke="#fff" strokeWidth="2" /><path d="M3 2h6l1 2h5v6H9L8 8H3z" fill="#fff" stroke="#444" strokeWidth=".6" /></svg>
        <svg width="16" height="17" viewBox="0 0 16 17" className="mr-[9px]"><path d="M1 6h3l5-5v15l-5-5H1z" fill="#fff" stroke="#444" strokeWidth=".6" /><circle cx="11" cy="12" r="4.300" fill="#fff" stroke="#e02020" strokeWidth="1.700" /><path d="M8 9l6 6" stroke="#e02020" strokeWidth="1.700" /></svg>
        <svg width="16" height="17" viewBox="0 0 16 17" className="mr-[14px]"><rect x="4.500" y="4.500" width="10.500" height="8" fill="#667" stroke="#fff" strokeWidth="1.300" /><path d="M6 15.500h8M2 1v3M5 1v3M1 4h5v3H1zM3.500 7v8" fill="none" stroke="#fff" strokeWidth="1.500" /></svg>
        <div className="flex w-[56px] flex-col items-center"><T w={44}>9:37 AM</T><T w={53}>11/4/2015</T></div>
        <div className="ml-[8px] h-[39px] w-[14px] border border-[#444] bg-[linear-gradient(135deg,#a5ada8,#6a736d)]" />
      </div>
    </div>
  );
}

export default function App() {
  return (
    <div className="relative h-[1080px] w-[1920px] overflow-hidden bg-white font-['Open_Sans','Noto_Sans',sans-serif]">
      <BackWindow />
      <Taskbar />
      <FrontWindow />
    </div>
  );
}
